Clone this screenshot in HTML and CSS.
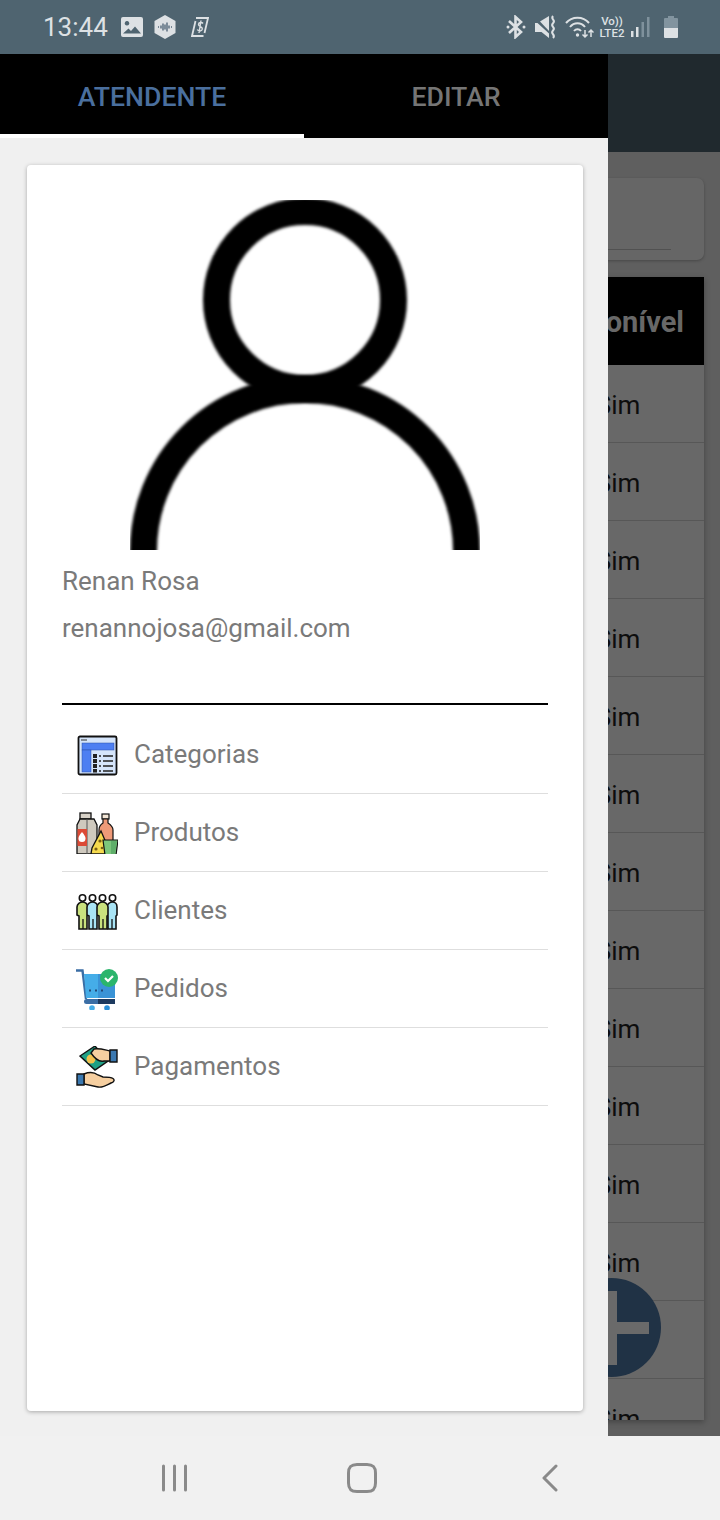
FILE: index.html
```html
<!DOCTYPE html>
<html>

<head>
    <meta charset="UTF-8" />
    <meta name="viewport" content="width=device-width" />
    <title>Atendente</title>
    <link rel="stylesheet" href="styles.css">
</head>

<body>
    <div class="screen">
        <div class="status-bar">
            <div class="status-left">
                <span class="clock">13:44</span>
                <svg class="st-image" width="22" height="20" viewBox="0 0 22 20">
                    <path fill="#dde1e4" fill-rule="evenodd" d="M2 0h18a2 2 0 0 1 2 2v16a2 2 0 0 1-2 2H2a2 2 0 0 1-2-2V2a2 2 0 0 1 2-2zM2 16.500h18l-6-7-4 4.500-2.500-2.500zM6 4a2.300 2.300 0 1 0 .01 0z" />
                </svg>
                <svg class="st-hex" width="22" height="24" viewBox="0 0 22 24">
                    <path fill="#dde1e4" d="M11 0l10.500 6v12L11 24 .5 18V6z" />
                    <path stroke="#53687a" stroke-width="1.400" d="M4 12h1M7 10.500v3M9 8.500v7M11 9.500v5M13 7.500v9M15 10.500v3M17 12h1" />
                </svg>
                <svg class="st-cash" width="18" height="20" viewBox="0 0 18 20" fill="none" stroke="#dde1e4" stroke-width="1.800">
                    <path d="M5 1h12l-3.500 15M12.500 19H1L4.500 4" />
                    <path d="M12 6.500C11 5 7.500 5 7.500 7.500s4 2 3.800 4.500-4 2.500-5 .5M10 3.500L8 16" stroke-width="1.400" />
                </svg>
            </div>
            <div class="status-right">
                <svg width="20" height="24" viewBox="0 0 20 24" fill="none" stroke="#dde1e4" stroke-width="2.600">
                    <path d="M3 6l12 11-5.500 5V2L15 7 3 18" />
                    <circle cx="2" cy="12" r="1.500" fill="#dde1e4" stroke="none" />
                    <circle cx="18" cy="12" r="1.500" fill="#dde1e4" stroke="none" />
                </svg>
                <svg class="st-mute" width="22" height="24" viewBox="0 0 22 24">
                    <path fill="#dde1e4" d="M0 8h2.500L14 18.500V23l-7.500-6H0z" />
                    <path fill="#dde1e4" d="M5 6.500L14 1v15z" />
                    <path fill="none" stroke="#dde1e4" stroke-width="2" d="M18 1c-3 3.500 3.500 4 0 7.300s3.500 4 0 7.300 3.500 4 0 7.400" />
                </svg>
                <svg class="st-wifi" width="29" height="24" viewBox="0 0 29 24" fill="none" stroke="#dde1e4" stroke-width="2">
                    <path d="M1 8c6-7 17-7 23 0M5 12c4-5 11-5 15 0M9 16c2-2.500 5-2.500 7 0" />
                    <circle cx="12.500" cy="20" r="1.700" fill="#dde1e4" stroke="none" />
                    <path stroke-width="1.500" d="M20 15v7M17.500 19.500L20 22l2.500-2.500M26 22v-7M23.500 17.500L26 15l2.500 2.500" />
                </svg>
                <div class="st-volte"><span>Vo))</span><span>LTE2</span></div>
                <svg class="st-signal" width="19" height="22" viewBox="0 0 19 22">
                    <rect x="0" y="15" width="2.500" height="6" fill="#dde1e4" />
                    <rect x="5" y="11" width="2.500" height="10" fill="#dde1e4" />
                    <rect x="10.500" y="6" width="2.500" height="15" fill="#7f919c" />
                    <rect x="16" y="1" width="2.500" height="20" fill="#7f919c" />
                </svg>
                <svg class="st-battery" width="14" height="22" viewBox="0 0 14 22">
                    <path fill="#82949f" d="M4 0h6v2h3a1 1 0 0 1 1 1v9H0V3a1 1 0 0 1 1-1h3z" />
                    <path fill="#dde1e4" d="M0 12h14v9a1 1 0 0 1-1 1H1a1 1 0 0 1-1-1z" />
                </svg>
            </div>
        </div>

        <div class="main">
            <div class="app">
                <div class="app-header"></div>
                <div class="app-body">
                    <div class="search-card">
                        <div class="search-line"></div>
                    </div>
                    <div class="table">
                        <div class="table-head"><span>Disponível</span></div>
                        <div class="table-row"><span>Sim</span></div>
                        <div class="table-row"><span>Sim</span></div>
                        <div class="table-row"><span>Sim</span></div>
                        <div class="table-row"><span>Sim</span></div>
                        <div class="table-row"><span>Sim</span></div>
                        <div class="table-row"><span>Sim</span></div>
                        <div class="table-row"><span>Sim</span></div>
                        <div class="table-row"><span>Sim</span></div>
                        <div class="table-row"><span>Sim</span></div>
                        <div class="table-row"><span>Sim</span></div>
                        <div class="table-row"><span>Sim</span></div>
                        <div class="table-row"><span>Sim</span></div>
                        <div class="table-row"><span>Sim</span></div>
                        <div class="table-row"><span>Sim</span></div>
                    </div>
                </div>
                <div class="fab"></div>
            </div>

            <div class="drawer">
                <div class="tabs">
                    <div class="tab active">ATENDENTE</div>
                    <div class="tab">EDITAR</div>
                </div>
                <div class="drawer-body">
                    <div class="card">
                        <svg class="avatar" width="350" height="350" viewBox="0 0 350 350" fill="none" stroke="#000" stroke-width="27">
                            <circle class="avatar-line" cx="175" cy="100" r="88.500" />
                            <circle class="avatar-line" cx="175" cy="351" r="161.500" />
                        </svg>
                        <div class="user-name">Renan Rosa</div>
                        <div class="user-mail">renannojosa@gmail.com</div>
                        <div class="divider"></div>
                        <div class="menu">
                            <div class="menu-row">
                                <svg class="menu-icon" width="42" height="42" viewBox="0 0 42 42">
                                    <rect x="2.500" y="2.500" width="38" height="38" rx="1.500" fill="#d5e5fb" stroke="#111" stroke-width="1.800" />
                                    <path stroke="#333" d="M5 6h6" />
                                    <rect x="6" y="9" width="32" height="7" fill="#4d7ff2" stroke="#2b4fa8" stroke-width=".5" />
                                    <rect x="6" y="16" width="9" height="22" fill="#4d7ff2" stroke="#2b4fa8" stroke-width=".5" />
                                    <g fill="#222">
                                        <rect x="17" y="20" width="4" height="4" />
                                        <rect x="17" y="25" width="4" height="4" />
                                        <rect x="17" y="30" width="4" height="4" />
                                        <rect x="17" y="35" width="4" height="3.500" />
                                    </g>
                                    <path stroke="#222" stroke-width="1.300" d="M23 22h2M27 22h10M23 27h2M27 27h10M23 32h2M27 32h10M23 37h2M27 37h10" />
                                </svg>
                                <span>Categorias</span>
                            </div>
                            <div class="menu-row">
                                <svg class="menu-icon" width="42" height="42" viewBox="0 0 42 42">
                                    <rect x="4" y="1" width="11" height="6" fill="#d8d2c8" stroke="#111" stroke-width="1.300" />
                                    <path d="M4 7L1 13v29h20V13l-3-6z" fill="#cfc9be" stroke="#111" stroke-width="1.300" />
                                    <path d="M11 7v35" stroke="#555" />
                                    <rect x="1.500" y="17" width="9.500" height="17" fill="#dc4a36" />
                                    <path d="M6 20c2.500 3 3.500 4.500 3.500 6.500a3.500 3.500 0 0 1-7 0c0-2 1-3.500 3.500-6.500z" fill="#fff" />
                                    <rect x="26" y="2" width="7" height="5" fill="#f2e6d6" stroke="#111" stroke-width="1.200" />
                                    <path d="M27 7h5v4c3 2 5 4 5 7v16H23V18c0-3 1-5 4-7z" fill="#ef9a78" stroke="#111" stroke-width="1.200" />
                                    <path d="M25 19l6 14-2 9H15l1-6z" fill="#f5da4e" stroke="#111" stroke-width="1.300" />
                                    <circle cx="24" cy="29" r="1.600" fill="#7a5f14" />
                                    <circle cx="20" cy="37" r="1.600" fill="#7a5f14" />
                                    <circle cx="26" cy="36" r="1.300" fill="#7a5f14" />
                                    <path d="M27 28h15l-2 15H29z" fill="#7cc67c" stroke="#111" stroke-width="1.200" />
                                    <path d="M35 29h6l-2 13h-4z" fill="#5fae6a" />
                                </svg>
                                <span>Produtos</span>
                            </div>
                            <div class="menu-row">
                                <svg class="menu-icon" width="42" height="42" viewBox="0 0 42 42" stroke="#111" stroke-width="1.600">
                                    <g fill="#fff">
                                        <circle cx="6.500" cy="8" r="3.200" />
                                        <circle cx="16.500" cy="8" r="3.200" />
                                        <circle cx="26.500" cy="8" r="3.200" />
                                        <circle cx="36.500" cy="8" r="3.200" />
                                    </g>
                                    <path d="M1 17c0-3 3-5 5.500-5S12 14 12 17v8l-1 1v13H3V26l-2-1z" fill="#c9e27e" />
                                    <path d="M31 17c0-3 3-5 5.500-5S41 14 41 17v8l-1 1v13h-8V26l-1-1z" fill="#a9e4f5" />
                                    <path d="M11 17c0-3 3-5 5.500-5S22 14 22 17v8l-1 1v13h-8V26l-2-1z" fill="#a9e4f5" />
                                    <path d="M21 17c0-3 3-5 5.500-5S32 14 32 17v8l-1 1v13h-8V26l-2-1z" fill="#c9e27e" />
                                    <path d="M7 29v10M17 29v10M27 29v10M36 29v10" stroke-width="1.300" />
                                </svg>
                                <span>Clientes</span>
                            </div>
                            <div class="menu-row">
                                <svg class="menu-icon" width="42" height="42" viewBox="0 0 42 42">
                                    <path d="M0 2.500h6.500L10 31" fill="none" stroke="#3b6ea5" stroke-width="2.400" />
                                    <path d="M8 6h14v24H10z" fill="#45ade8" />
                                    <path d="M22 6h17v24H22z" fill="#3a93d6" />
                                    <path stroke="#234a78" stroke-width="2" stroke-dasharray="2 4" d="M13 22.500h18" />
                                    <path d="M22 31H10.500a2.500 2.500 0 0 0 0 5H22z" fill="#3b6ea5" />
                                    <path d="M22 31h17v5H22z" fill="#1d3a5f" />
                                    <circle cx="16" cy="40" r="2.800" fill="#45ade8" />
                                    <circle cx="31" cy="40" r="2.800" fill="#2a8fd8" />
                                    <circle cx="33" cy="10" r="9" fill="#2bb56c" />
                                    <path d="M29 10l3 3 5-5" fill="none" stroke="#fff" stroke-width="2.200" />
                                </svg>
                                <span>Pedidos</span>
                            </div>
                            <div class="menu-row">
                                <svg class="menu-icon" width="42" height="42" viewBox="0 0 42 42" stroke="#111" stroke-width="1.400">
                                    <path d="M4 10L19 0l13 15-13 9z" fill="#1fa085" />
                                    <circle cx="15" cy="13" r="4.500" fill="#f2c14e" stroke="none" />
                                    <path d="M18 3c6-1 11 1 16 2v10h-6c-4 1-9-2-13-8z" fill="#f6cfa0" />
                                    <path d="M34 4h7v12h-7z" fill="#3a78b0" />
                                    <path d="M8 28c5-2 10-2 14 1l5 2c3 0 8 0 10 1.500 2 1.500 1 3.500-2 4.500-4 2-8 5-13 4l-14-3z" fill="#f6cfa0" />
                                    <path d="M1 28h7v11H1z" fill="#3a78b0" />
                                </svg>
                                <span>Pagamentos</span>
                            </div>
                        </div>
                    </div>
                </div>
            </div>
        </div>

        <div class="nav-bar">
            <svg width="27" height="28" viewBox="0 0 27 28" stroke="#8a8a8a" stroke-width="3" stroke-linecap="round">
                <path d="M2.500 2v24M13.500 2v24M24.500 2v24" />
            </svg>
            <svg width="30" height="30" viewBox="0 0 30 30" fill="none" stroke="#8a8a8a" stroke-width="3">
                <path d="M10 1.500h10c6 0 8.500 2.500 8.500 8.500v10c0 6-2.500 8.500-8.500 8.500H10c-6 0-8.500-2.500-8.500-8.500V10c0-6 2.500-8.500 8.500-8.500z" />
            </svg>
            <svg width="17" height="28" viewBox="0 0 17 28" fill="none" stroke="#8a8a8a" stroke-width="3" stroke-linecap="round" stroke-linejoin="round">
                <path d="M15 2L3 14l12 12" />
            </svg>
        </div>
    </div>
</body>

</html>
```

FILE: styles.css
```css
* {
    box-sizing: border-box;
}

html,
body {
    margin: 0;
    padding: 0;
}

body {
    font-family: Roboto, "Liberation Sans", sans-serif;
    background: #f1f1f1;
}

.screen {
    width: 720px;
    height: 1520px;
    display: flex;
    flex-direction: column;
    overflow: hidden;
}

/* status bar */
.status-bar {
    height: 54px;
    flex: none;
    background: #4f6470;
    display: flex;
    justify-content: space-between;
    align-items: center;
    color: #dde1e4;
}

.status-left {
    display: flex;
    align-items: center;
    padding-left: 43px;
}

.clock {
    font-size: 26px;
    width: 78px;
}

.st-hex {
    margin-left: 11px;
}

.st-cash {
    margin-left: 15px;
}

.status-right {
    display: flex;
    align-items: center;
    padding-right: 42px;
}

.st-mute {
    margin-left: 9px;
}

.st-wifi {
    margin-left: 8px;
}

.st-volte {
    display: flex;
    flex-direction: column;
    align-items: center;
    font-size: 11.500px;
    font-weight: 500;
    line-height: 12px;
    margin-left: 4px;
    width: 28px;
}

.st-signal {
    margin-left: 5px;
}

.st-battery {
    margin-left: 14px;
}

/* app behind the drawer */
.main {
    flex: 1;
    position: relative;
    min-height: 0;
}

.app {
    height: 100%;
    background: #5f5f5f;
}

.app-header {
    height: 98px;
    background: #20292e;
}

.app-body {
    padding: 26px 16px 0;
}

.search-card {
    height: 82px;
    background: #666;
    border-radius: 7px;
    box-shadow: 0 1px 3px rgba(0, 0, 0, 0.25);
    padding: 71px 33px 0 0;
}

.search-line {
    height: 1px;
    background: #515151;
}

.table {
    margin-top: 17px;
    height: 1143px;
    overflow: hidden;
    background: #686868;
    box-shadow: 0 2px 6px rgba(0, 0, 0, 0.3);
}

.table-head,
.table-row {
    display: flex;
    justify-content: flex-end;
    align-items: center;
}

.table-head span,
.table-row span {
    width: 176px;
    text-align: center;
    padding-top: 2px;
}

.table-head {
    height: 88px;
    background: #000;
    color: #686868;
    font-size: 29px;
    font-weight: 700;
}

.table-row {
    height: 78px;
    flex: none;
    font-size: 26px;
    color: #0d0d0d;
    border-bottom: 1px solid #575757;
}

.table-row span {
    padding-left: 4px;
}

.fab {
    position: absolute;
    left: 562px;
    top: 1224px;
    width: 99px;
    height: 99px;
    border-radius: 50%;
    background: #203245;
}

.fab::before,
.fab::after {
    content: "";
    position: absolute;
    background: #6a6a6a;
}

.fab::before {
    left: 44px;
    top: 13px;
    width: 11px;
    height: 74px;
}

.fab::after {
    left: 12px;
    top: 44px;
    width: 75px;
    height: 12px;
}

/* drawer */
.drawer {
    position: absolute;
    left: 0;
    top: 0;
    bottom: 0;
    width: 608px;
    background: #f0f0f0;
    display: flex;
    flex-direction: column;
}

.tabs {
    height: 84px;
    flex: none;
    display: flex;
    background: #000;
}

.tab {
    flex: 1;
    display: flex;
    align-items: center;
    justify-content: center;
    padding-top: 5px;
    padding-bottom: 4px;
    font-size: 26.700px;
    font-weight: 500;
    color: #757575;
}

.tab.active {
    color: #4a6f9e;
    border-bottom: 4px solid #fff;
    padding-bottom: 0;
}

.drawer-body {
    flex: 1;
    padding: 27px 25px 25px 27px;
    min-height: 0;
}

.card {
    height: 100%;
    background: #fff;
    border-radius: 4px;
    box-shadow: 0 1px 4px rgba(0, 0, 0, 0.3);
    padding: 35px 35px 0;
    color: #7a7a7a;
    font-size: 26px;
}

.avatar {
    display: block;
    margin: 0 auto;
}

.avatar-line {
    filter: blur(1.500px);
}

.user-name {
    margin-top: 16px;
    line-height: 30px;
}

.user-mail {
    margin-top: 17px;
    line-height: 30px;
}

.divider {
    height: 2px;
    background: #000;
    margin-top: 60px;
    margin-bottom: 11px;
}

.menu-row {
    height: 78px;
    display: flex;
    align-items: center;
    padding-left: 14px;
    gap: 16px;
    border-bottom: 1px solid #dedede;
}

.menu-row span {
    margin-bottom: 2px;
}

.menu-icon {
    flex: none;
    display: block;
}

/* nav bar */
.nav-bar {
    height: 84px;
    flex: none;
    background: #f1f1f1;
    display: flex;
    align-items: center;
}

.nav-bar svg:nth-child(1) {
    margin-left: 161px;
}

.nav-bar svg:nth-child(2) {
    margin-left: 159px;
}

.nav-bar svg:nth-child(3) {
    margin-left: 164px;
}
```
